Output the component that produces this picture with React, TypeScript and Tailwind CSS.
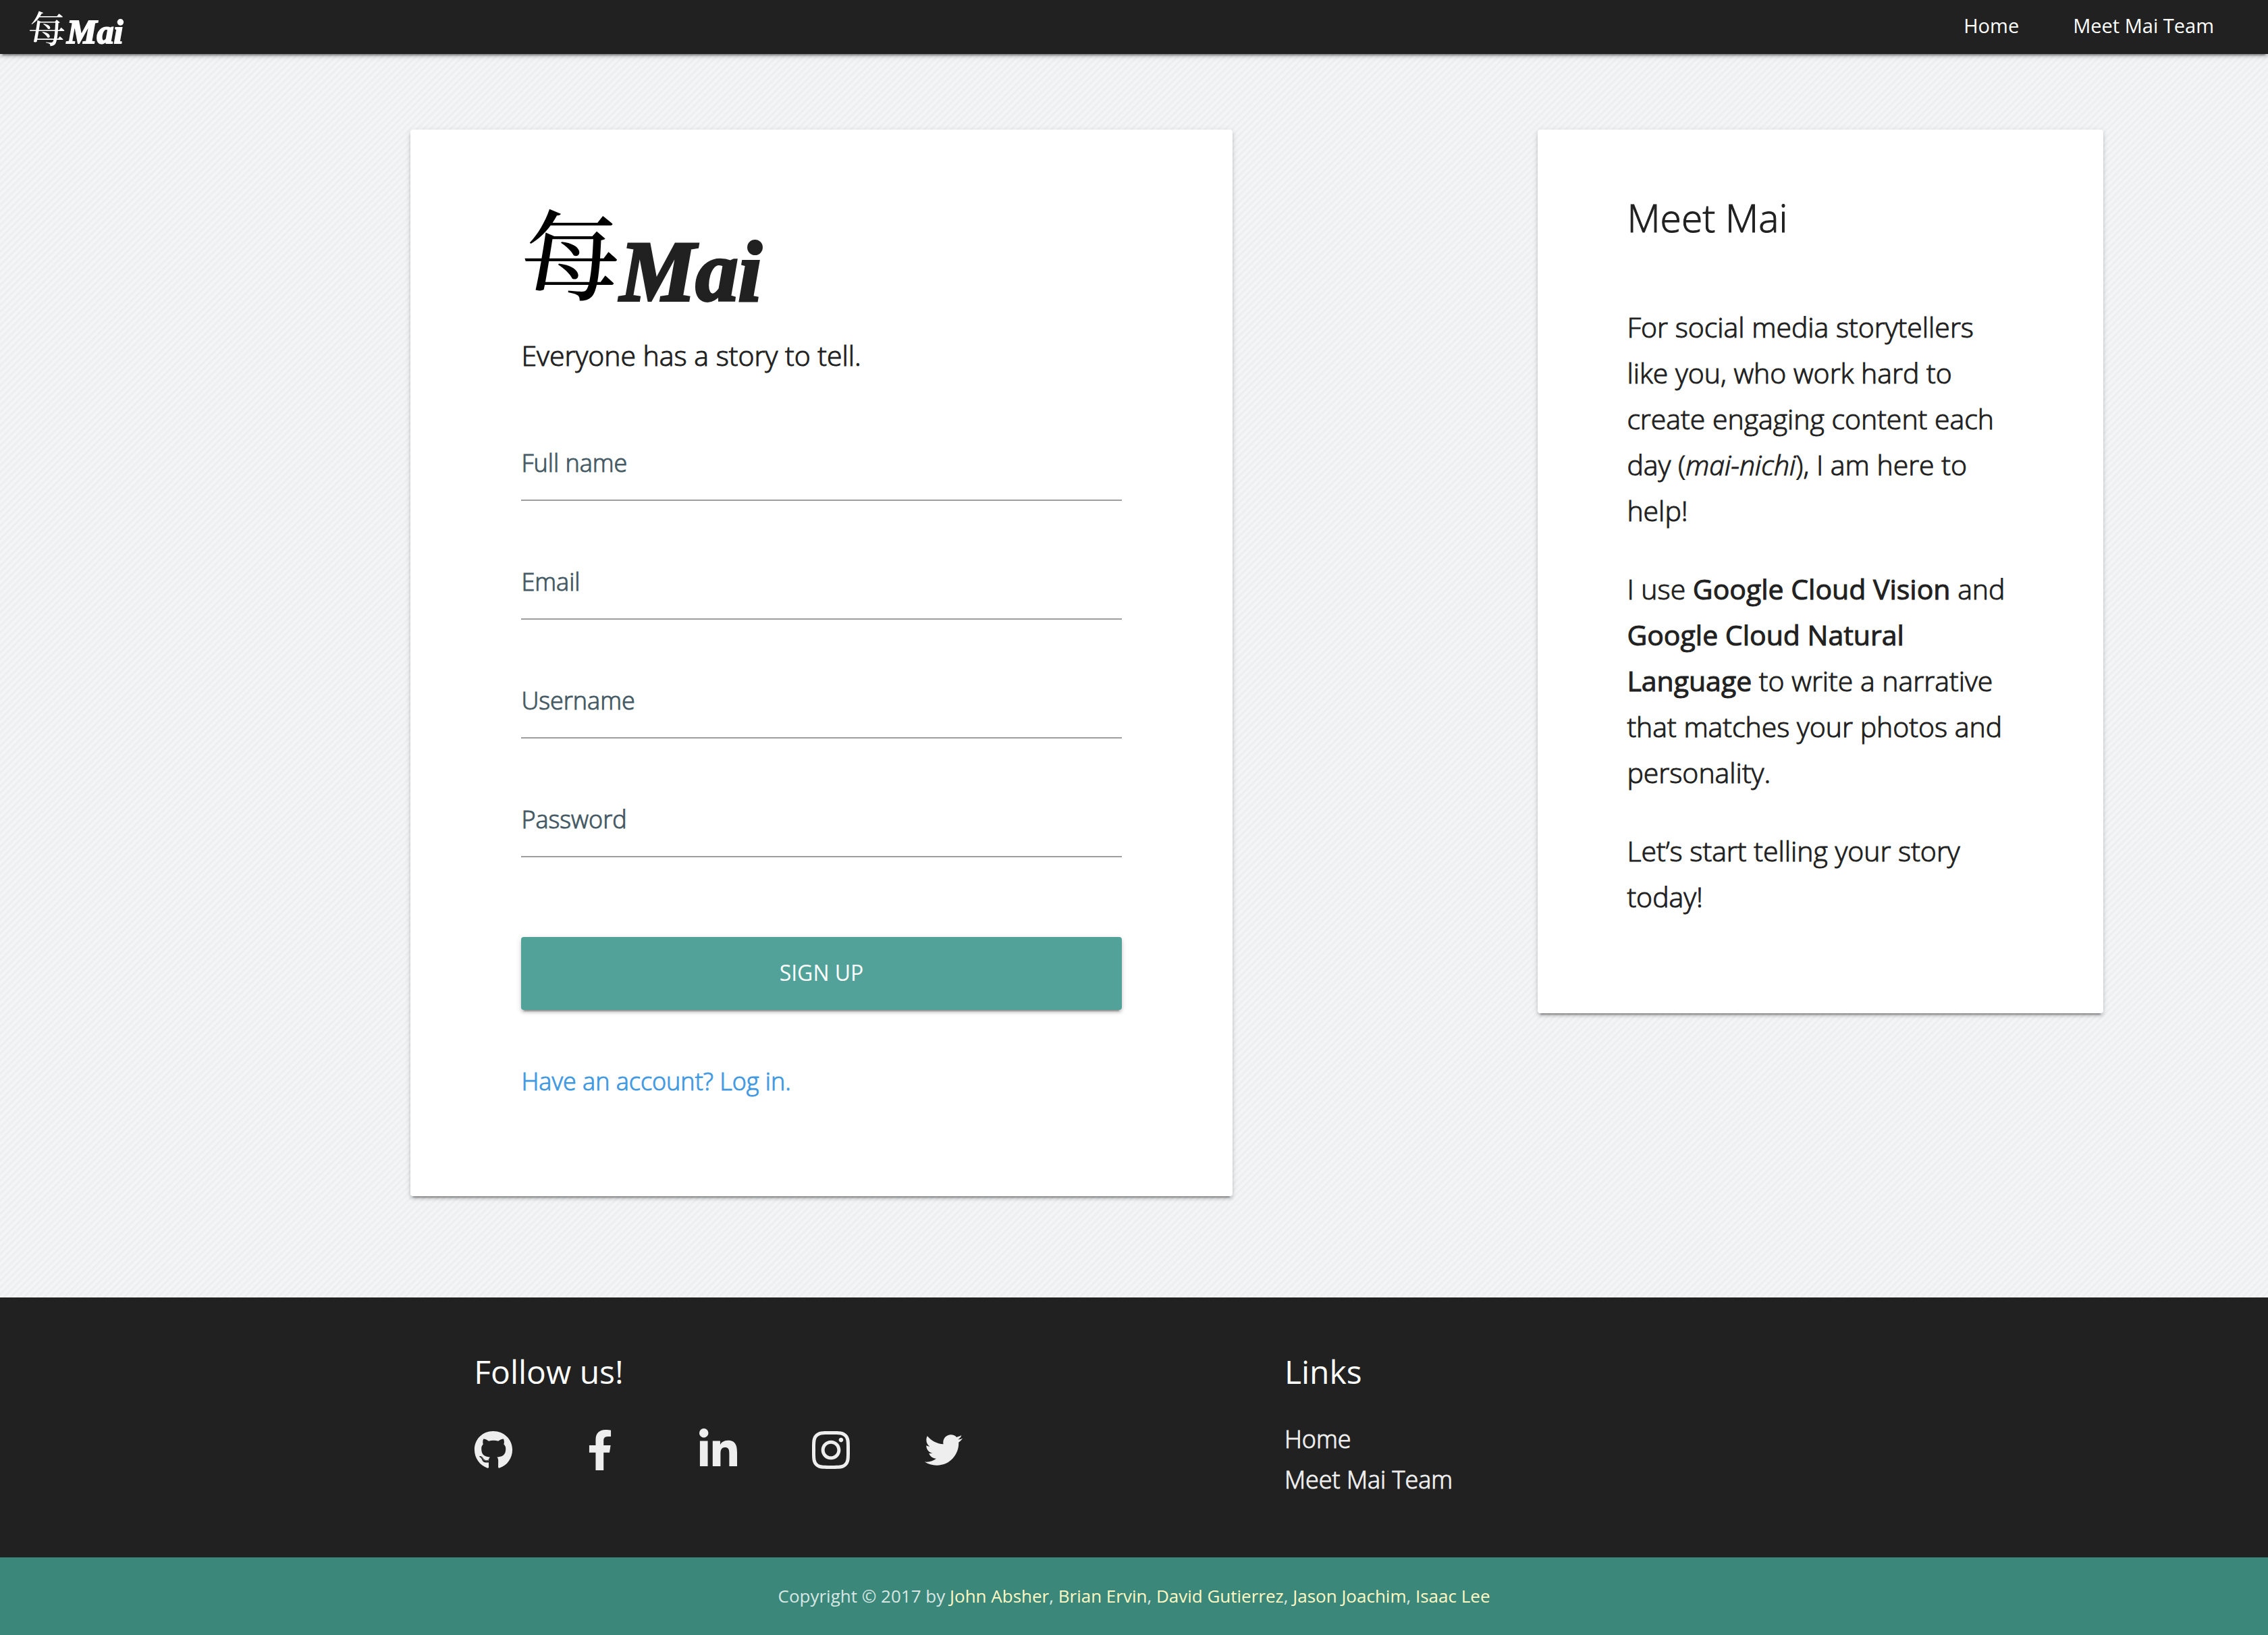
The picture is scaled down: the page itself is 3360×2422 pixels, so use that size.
import { FaFacebookF, FaGithub, FaInstagram, FaLinkedinIn, FaTwitter } from "react-icons/fa";

const shadow =
  "shadow-[0_4px_4px_0_rgba(0,0,0,0.14),0_2px_10px_0_rgba(0,0,0,0.12),0_6px_2px_-4px_rgba(0,0,0,0.3)]";

const sturdy = "[-webkit-text-stroke:1px_currentColor]";

const fields = [
  { id: "fullname", label: "Full name", type: "text" },
  { id: "email", label: "Email", type: "email" },
  { id: "username", label: "Username", type: "text" },
  { id: "password", label: "Password", type: "password" },
];

const social = [
  { name: "GitHub", icon: <FaGithub className="h-[58px] w-[58px]" /> },
  { name: "Facebook", icon: <FaFacebookF className="h-[60px] w-[40px]" /> },
  { name: "LinkedIn", icon: <FaLinkedinIn className="h-[64px] w-[56px]" /> },
  { name: "Instagram", icon: <FaInstagram className="h-[64px] w-[56px]" /> },
  { name: "Twitter", icon: <FaTwitter className="h-[56px] w-[56px]" /> },
];

const authors = ["John Absher", "Brian Ervin", "David Gutierrez", "Jason Joachim", "Isaac Lee"];

function Header() {
  return (
    <header
      className={`relative z-10 flex h-[80px] items-center justify-between bg-[#212121] pr-[80px] pl-[42px] text-white ${shadow}`}
    >
      <a href="#" className="flex h-[80px] items-start gap-0.5">
        <span className="font-['Noto_Serif_CJK_JP','Noto_Sans_CJK_JP',serif] text-[55px] leading-[80px] font-medium">
          每
        </span>
        <span className="font-['Liberation_Serif',serif] text-[50px] leading-[94px] font-bold italic [-webkit-text-stroke:2px_currentColor]">
          Mai
        </span>
      </a>
      <nav className="flex gap-[80px] pb-[4px] text-[29px] leading-[40px] font-normal">
        <a href="#">Home</a>
        <a href="#">Meet Mai Team</a>
      </nav>
    </header>
  );
}

function SignUpCard() {
  return (
    <section className={`rounded-[4px] bg-white px-[13.5%] pt-[100px] pb-[146px] ${shadow}`}>
      <h1 className="flex h-[200px] items-start">
        <span className="font-['Noto_Serif_CJK_JP','Noto_Sans_CJK_JP',serif] text-[146px] leading-[156px] font-medium text-black">
          每
        </span>
        <span className="font-['Liberation_Serif',serif] text-[126px] leading-[222px] font-bold italic [-webkit-text-stroke:4px_currentColor]">
          Mai
        </span>
      </h1>
      <p className={`text-[41px] leading-[68px] ${sturdy}`}>Everyone has a story to tell.</p>
      <form className="mt-[6px]" onSubmit={(e) => e.preventDefault()}>
        {fields.map((f) => (
          <div key={f.id} className="relative pt-[84px]">
            <label
              htmlFor={f.id}
              className={`absolute bottom-[32px] left-0 text-[36px] leading-[48px] text-[#455a64] ${sturdy}`}
            >
              {f.label}
            </label>
            <input
              id={f.id}
              type={f.type}
              className="block h-[92px] w-full border-b-2 border-[#9e9e9e] bg-transparent text-[36px] outline-none"
            />
          </div>
        ))}
        <button
          type="submit"
          className={`mt-[118px] block h-[108px] w-full rounded-[4px] bg-[#52a299] pb-[2px] text-[32px] font-normal text-white ${shadow}`}
        >
          SIGN UP
        </button>
      </form>
      <a href="#" className={`mt-[82px] block text-[36px] leading-[48px] text-[#4299e1] ${sturdy}`}>
        Have an account? Log in.
      </a>
    </section>
  );
}

function AboutCard() {
  return (
    <section className={`rounded-[4px] bg-white px-[15.8%] pt-[88px] pb-[139px] ${shadow}`}>
      <h2 className={`text-[57px] leading-[84px] ${sturdy}`}>Meet Mai</h2>
      <div className={`mt-[86px] flex flex-col gap-[48px] text-[41px] leading-[68px] ${sturdy}`}>
        <p>
          For social media storytellers like you, who work hard to create engaging content each day (
          <em>mai-nichi</em>), I am here to help!
        </p>
        <p>
          I use <strong className="font-normal">Google Cloud Vision</strong> and{" "}
          <strong className="font-normal">Google Cloud Natural Language</strong> to write a narrative that
          matches your photos and personality.
        </p>
        <p>Let’s start telling your story today!</p>
      </div>
    </section>
  );
}

function Footer() {
  return (
    <footer className="bg-[#212121] text-white">
      <div className="grid grid-cols-[1199fr_1455fr] pt-[72px] pb-[85px] pl-[20.9%]">
        <section>
          <h3 className="text-[48px] leading-[76px] font-normal">Follow us!</h3>
          <ul className="mt-[46px] flex text-[#eeeeee]">
            {social.map((s) => (
              <li key={s.name} className="w-[167px]">
                <a href="#" aria-label={s.name} className="flex h-[64px] items-center">
                  {s.icon}
                </a>
              </li>
            ))}
          </ul>
        </section>
        <section>
          <h3 className="text-[48px] leading-[76px] font-normal">Links</h3>
          <ul className={`mt-[32px] text-[36px] leading-[60px] text-[#eeeeee] ${sturdy}`}>
            <li>
              <a href="#">Home</a>
            </li>
            <li>
              <a href="#">Meet Mai Team</a>
            </li>
          </ul>
        </section>
      </div>
      <div className="flex h-[116px] items-center justify-center bg-[#3b877a] pb-[2px] text-[26px] leading-[40px] font-normal text-[#d8e7e4]">
        <p>
          Copyright © 2017 by{" "}
          {authors.map((a, i) => (
            <span key={a}>
              {i > 0 && ", "}
              <a href="#" className="text-[#fff9c4]">
                {a}
              </a>
            </span>
          ))}
        </p>
      </div>
    </footer>
  );
}

export default function App() {
  return (
    <div className="min-h-screen bg-[#eff1f3] font-['Open_Sans',sans-serif] font-light text-[#212121]">
      <Header />
      <main className="grid grid-cols-[608fr_1218fr_452fr_838fr_244fr] items-start bg-[repeating-linear-gradient(135deg,#f4f5f7_0px,#f4f5f7_2px,#ecedef_4px,#eeeff1_5px,#f4f5f7_7px)] pt-[112px] pb-[150px]">
        <div className="col-start-2">
          <SignUpCard />
        </div>
        <div className="col-start-4">
          <AboutCard />
        </div>
      </main>
      <Footer />
    </div>
  );
}
